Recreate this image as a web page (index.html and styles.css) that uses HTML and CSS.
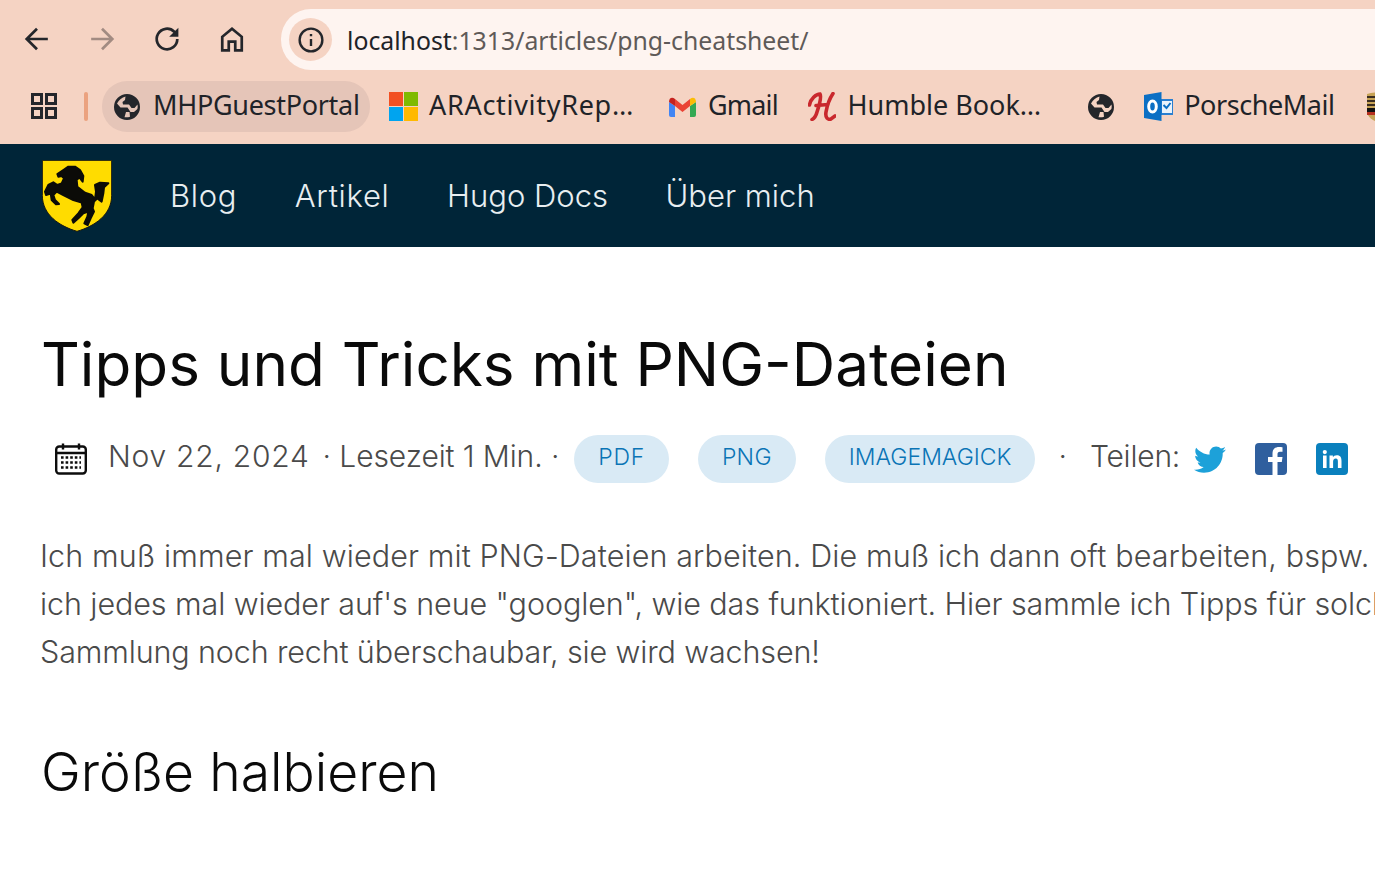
FILE: index.html
```html
<!DOCTYPE html>
<html lang="de">
<head>
<meta charset="utf-8">
<title>Tipps und Tricks mit PNG-Dateien</title>
<link rel="stylesheet" href="styles.css">
</head>
<body>
<header class="chrome">
  <div class="toolbar">
    <svg class="tool tool-back" viewBox="0 0 24 24"><path d="M22 12H2.500M12 2.500 2.500 12l9.500 9.500" /></svg>
    <svg class="tool tool-fwd" viewBox="0 0 24 24"><path d="M2 12h19.500M12 2.500l9.500 9.500-9.500 9.500" /></svg>
    <svg class="tool tool-reload" viewBox="0 0 24 24"><path d="M21.500 12a9.500 9.500 0 1 1-2.800-6.700L21 8" /><path class="solid" d="M22.500 1.500v8.500H14z" /></svg>
    <svg class="tool tool-home" viewBox="0 0 24 24"><path d="M3 22.500V10L12 2.500 21 10v12.500h-6v-8H9v8z" /></svg>
    <div class="omnibox">
      <span class="chip"><svg class="info" viewBox="0 0 24 24"><circle cx="12" cy="12" r="10.500" /><path d="M12 11v6.500M12 6.500v2" /></svg></span>
      <span class="url"><span class="host">localhost</span>:1313/articles/png-cheatsheet/</span>
    </div>
  </div>
  <div class="bookmarks">
    <svg class="apps" viewBox="0 0 26 26"><path d="M1.500 1.500h9v9h-9zM15.500 1.500h9v9h-9zM1.500 15.500h9v9h-9zM15.500 15.500h9v9h-9z" /></svg>
    <span class="sep"></span>
    <div class="bm bm-active">
      <svg class="ico" viewBox="0 0 26 26"><use href="#globe" /></svg>
      <span class="bm-label">MHPGuestPortal</span>
    </div>
    <div class="bm bm-ar">
      <svg class="ico ico-ms" viewBox="0 0 29 29"><rect width="14" height="14" fill="#f25022" /><rect x="15" width="14" height="14" fill="#7fba00" /><rect y="15" width="14" height="14" fill="#00a4ef" /><rect x="15" y="15" width="14" height="14" fill="#ffb900" /></svg>
      <span class="bm-label">ARActivityRep…</span>
    </div>
    <div class="bm bm-gmail">
      <svg class="ico ico-gmail" viewBox="0 0 27 20"><path d="M6 2l7.500 6L21 2v7l-7.500 6L6 9z" fill="#ea4335" /><path d="M0 5v13a2 2 0 0 0 2 2h4V9z" fill="#4285f4" /><path d="M27 5v13a2 2 0 0 1-2 2h-4V9z" fill="#34a853" /><path d="M0 5C0 1 3-.5 6 2v7z" fill="#c5221f" /><path d="M27 5c0-4-3-5.500-6-3v7z" fill="#fbbc04" /></svg>
      <span class="bm-label">Gmail</span>
    </div>
    <div class="bm bm-humble">
      <svg class="ico ico-humble" viewBox="0 0 28 29"><path d="M1.500 13C2.500 7 8 2 12 2c2 3-1 12-3 18-1 4-2 6-5 7.500M25 1.500C22 6 19 14 18 20c-1 6 2 8 5 7l4-3M8 13.500l12-1" /></svg>
      <span class="bm-label">Humble Book…</span>
    </div>
    <div class="bm bm-globe">
      <svg class="ico" viewBox="0 0 26 26"><use href="#globe" /></svg>
    </div>
    <div class="bm bm-outlook">
      <svg class="ico ico-outlook" viewBox="0 0 29 29"><rect x="16" y="7" width="13" height="16" fill="#2a7fd0" /><rect x="18" y="9" width="10" height="12" fill="#eaf3fb" /><path d="m19.500 13 3 3 4-5" class="tick" /><path d="M0 3 17.500 0v29L0 26z" fill="#0b6fc4" /><ellipse cx="8.500" cy="14.500" rx="3.800" ry="5.500" class="oh" /></svg>
      <span class="bm-label">PorscheMail</span>
    </div>
    <svg class="porsche" viewBox="0 0 20 30"><path d="M0 2C6 0 14 0 20 2v18c0 4-5 8-10 10C5 28 0 24 0 20z" fill="#c7a356" /><path d="M0 5h20M0 9h20M0 13h20" stroke="#3a2c20" stroke-width="2" /><rect y="16" width="20" height="4" fill="#111" /><rect y="20" width="20" height="3" fill="#b5301f" /></svg>
  </div>
</header>

<nav class="site-nav">
  <svg class="logo" viewBox="66 30 210 216">
    <path d="M67 31h208v105c0 58-50 92-104 108C117 228 67 194 67 136z" fill="#ffdc00" stroke="#1a1a10" stroke-width="3" />
    <path class="horse" d="M112 72 130 60 145 50h20l15 10 10 18-2 17-10-13-8 8 2 20 23 18 20 7 10 13 3-23-3-20 15-7 25 2-13 12-2 18-5 25-13-10-10 10-4 20 4 10-10 20-9 20-10-5 9-20 3-15-15 5-15 15-15 13-3-8 18-20 13-18-3-14-25-8-30-15-20-10-10 10 5 15 12 12-9 1-13-13-3-20-7 3-7 2-3-10 10-20 15-8 12 8 13-5 7-15-7-7-10 2z" />
  </svg>
  <a class="nav-link nav-wide">Blog</a>
  <a class="nav-link nav-wide">Artikel</a>
  <a class="nav-link">Hugo Docs</a>
  <a class="nav-link">Über mich</a>
</nav>

<main class="article">
  <h1>Tipps und Tricks mit PNG-Dateien</h1>
  <div class="meta">
    <svg class="cal" viewBox="0 0 32 32"><rect x="1.200" y="3.500" width="29.600" height="27" rx="3" class="cal-box" /><path d="M1 10h30M8 .5v6M24 .5v6" class="cal-box" /><path d="M6 14.500h20M6 19.500h20M6 24.500h20" class="cal-dots" /></svg>
    <span class="meta-text date">Nov 22, 2024</span>
    <span class="meta-text read">· Lesezeit 1 Min. ·</span>
    <a class="tag tag-pdf">PDF</a>
    <a class="tag tag-png">PNG</a>
    <a class="tag tag-im">IMAGEMAGICK</a>
    <span class="meta-text dot">·</span>
    <span class="meta-text share">Teilen:</span>
    <svg class="soc soc-tw" viewBox="0 0 32 26"><path d="M32 3.100c-1.200.5-2.400.9-3.800 1 1.400-.8 2.400-2.100 2.900-3.600-1.300.8-2.700 1.300-4.200 1.600C25.700.8 24 0 22.100 0c-3.600 0-6.600 2.900-6.600 6.600 0 .5.100 1 .2 1.500C10.200 7.800 5.400 5.200 2.200 1.200c-.6 1-.9 2.100-.9 3.300 0 2.300 1.200 4.300 2.900 5.500-1.100 0-2.100-.3-3-.8v.1c0 3.200 2.300 5.900 5.300 6.500-.6.100-1.100.2-1.700.2-.4 0-.8 0-1.200-.1.800 2.600 3.300 4.500 6.100 4.600-2.200 1.800-5.100 2.800-8.200 2.800-.5 0-1 0-1.600-.1 3 1.900 6.400 3 10.100 3 12.100 0 18.700-10 18.700-18.700v-.9c1.300-.9 2.400-2.100 3.300-3.500z" fill="#1da1d9" /></svg>
    <svg class="soc soc-fb" viewBox="0 0 32 32"><rect width="32" height="32" rx="4" fill="#2f5f9e" /><path d="M17.500 32V19h-4.500v-5h4.500v-3.500C17.500 6 20.200 4 24 4c1.500 0 2.800.1 3.500.2v4.500H25c-2 0-2.500 1-2.500 2.500V14h5l-.7 5h-4.300v13z" fill="#fff" /></svg>
    <svg class="soc soc-li" viewBox="0 0 32 32"><rect width="32" height="32" rx="4" fill="#0a80bd" /><path d="M7 12.500h3.600V25H7zM8.800 7a2.100 2.100 0 1 1 0 4.200 2.100 2.100 0 0 1 0-4.200zM13.500 12.500h3.400v1.700c.6-1.100 2-2 3.900-2 3.800 0 4.700 2.400 4.700 5.700V25h-3.600v-6.300c0-1.600-.2-3.100-2.100-3.100-2 0-2.700 1.400-2.700 3.100V25h-3.600z" fill="#fff" /></svg>
  </div>
  <p class="intro"><span class="line line-1">Ich muß immer mal wieder mit PNG-Dateien arbeiten. Die muß ich dann oft bearbeiten, bspw.</span><span class="line line-2">ich jedes mal wieder auf's neue "googlen", wie das funktioniert. Hier sammle ich Tipps für solch</span><span class="line line-3">Sammlung noch recht überschaubar, sie wird wachsen!</span></p>
  <h2>Größe halbieren</h2>
</main>

<svg class="defs" aria-hidden="true">
  <symbol id="globe" viewBox="0 0 26 26">
    <path fill="#24262b" fill-rule="evenodd" d="M13 0a13 13 0 1 1 0 26 13 13 0 0 1 0-26zM3 9.500C5 6 8 3.500 11.500 2.600L11 6 8.500 8 9 10.500h6L17.500 14h3l3-3.500c.3 1.500.3 3-.1 4.500L20 18h-3.500l-3-4.500h-7zM10.500 23.200 12 18h3.500l.5 4.800c-2 .6-3.500.7-5.500.4z" />
  </symbol>
</svg>
</body>
</html>
```

FILE: styles.css
```css
html, body {
  margin: 0;
  padding: 0;
  height: 880px;
  overflow: hidden;
  background: #fff;
}

.defs { display: none; }

.chrome {
  height: 144px;
  background: #f5d3c3;
  font-family: "Noto Sans", "Open Sans", sans-serif;
  color: #1f2328;
}

.toolbar {
  height: 78px;
  padding: 9px 0 0 24px;
  box-sizing: border-box;
  display: flex;
  align-items: flex-start;
}

.tool {
  width: 26px;
  height: 26px;
  margin-top: 17px;
  fill: none;
  stroke: #24262b;
  stroke-width: 2.500;
  flex: none;
}
.tool .solid { fill: #24262b; stroke: none; }
.tool-fwd { stroke: #a28b82; margin-left: 39px; }
.tool-reload { margin-left: 39px; }
.tool-home { margin-left: 39px; }

.omnibox {
  margin-left: 36px;
  flex: 1;
  height: 61px;
  background: #fef4f0;
  border-radius: 30px 0 0 30px;
  display: flex;
  align-items: center;
  padding-left: 8px;
}

.chip {
  width: 43px;
  height: 43px;
  border-radius: 50%;
  background: #f5d3c3;
  display: flex;
  align-items: center;
  justify-content: center;
}
.info {
  width: 26px;
  height: 26px;
  fill: none;
  stroke: #24262b;
  stroke-width: 2.200;
}

.url {
  margin-left: 15px;
  font-size: 24.800px;
  color: #5f5a58;
  white-space: nowrap;
}
.host { color: #1f2328; }

.bookmarks {
  height: 66px;
  display: flex;
  align-items: flex-start;
  padding-left: 31px;
  white-space: nowrap;
  overflow: hidden;
  font-size: 27px;
  letter-spacing: -0.300px;
}

.bm-label { margin-top: -5px; }

.apps {
  width: 26px;
  height: 26px;
  margin-top: 15px;
  fill: none;
  stroke: #24262b;
  stroke-width: 3;
  flex: none;
}

.sep {
  width: 4px;
  height: 29px;
  margin: 14px 0 0 27px;
  border-radius: 2px;
  background: #eba27f;
  flex: none;
}

.bm {
  display: flex;
  align-items: center;
  height: 51px;
  margin-top: 3px;
  flex: none;
}

.ico { width: 26px; height: 26px; flex: none; }

.bm-active {
  margin-left: 14px;
  padding: 0 11px 0 12px;
  width: 268px;
  box-sizing: border-box;
  gap: 13px;
  background: #e5c5b8;
  border-radius: 25px;
}

.bm-ar { margin-left: 19px; gap: 11px; letter-spacing: 0.700px; }
.ico-ms { width: 29px; height: 29px; }

.bm-gmail { margin-left: 35px; gap: 12px; letter-spacing: -0.800px; }
.ico-gmail { width: 27px; height: 20px; }

.bm-humble { margin-left: 30.500px; gap: 11px; letter-spacing: 0; }
.ico-humble {
  width: 28px;
  height: 29px;
  fill: none;
  stroke: #c9282d;
  stroke-width: 3.600;
  stroke-linecap: round;
}

.bm-globe { margin-left: 47px; }

.bm-outlook { margin-left: 30px; gap: 11px; letter-spacing: -0.450px; }
.ico-outlook { width: 29px; height: 29px; }
.tick { fill: none; stroke: #0b6fc4; stroke-width: 2; }
.oh { fill: none; stroke: #fff; stroke-width: 3; }

.porsche {
  width: 20px;
  height: 30px;
  margin: 14px 0 0 33px;
  flex: none;
}

.site-nav {
  height: 103px;
  background: #002538;
  display: flex;
  align-items: center;
  padding-left: 42px;
  font-family: "Inter", "Lato", sans-serif;
  font-weight: 300;
  font-size: 31px;
  color: #e8eef1;
}

.logo {
  width: 70px;
  height: 72px;
  margin-right: 58px;
  flex: none;
}
.horse {
  fill: #0b0b08;
  stroke: #0b0b08;
  stroke-width: 6;
  stroke-linejoin: round;
}

.nav-link { margin-right: 57.500px; white-space: nowrap; }
.nav-wide { letter-spacing: 0.700px; }

.article {
  padding: 0 0 0 40px;
  font-family: "Inter", "Lato", sans-serif;
  font-weight: 300;
  color: #4a4a4a;
  white-space: nowrap;
}

h1 {
  margin: 76px 0 0 1px;
  font-size: 60.200px;
  line-height: 84px;
  font-weight: 400;
  color: #0a0a0a;
}

h2 {
  margin: 61px 0 0 1px;
  font-size: 53.500px;
  line-height: 70px;
  font-weight: 300;
  color: #0a0a0a;
}

.meta {
  margin-top: 28px;
  display: flex;
  align-items: center;
  height: 48px;
  font-size: 30px;
}

.meta-text { padding-bottom: 6px; }

.cal {
  width: 32px;
  height: 32px;
  margin: 0 0 0 15px;
  flex: none;
}
.cal-box { fill: none; stroke: #0d0d0d; stroke-width: 2.400; }
.cal-dots { fill: none; stroke: #0d0d0d; stroke-width: 2.600; stroke-dasharray: 2.600 2; }

.date { margin-left: 21px; letter-spacing: 0.750px; }
.read { margin-left: 13px; letter-spacing: -0.100px; }

.tag {
  height: 48px;
  box-sizing: border-box;
  padding: 0 24px 5px;
  border-radius: 24px;
  background: #d9eaf5;
  color: #0a74b5;
  font-size: 23px;
  font-weight: 300;
  display: flex;
  align-items: center;
  flex: none;
}
.tag-pdf { margin-left: 15px; letter-spacing: 0.700px; }
.tag-png { margin-left: 29px; letter-spacing: 0.300px; }
.tag-im { margin-left: 29px; }

.dot { margin-left: 23px; }
.share { margin-left: 23px; letter-spacing: -0.200px; }

.soc { flex: none; width: 32px; height: 32px; }
.soc-tw { margin-left: 14px; height: 27px; }
.soc-fb { margin-left: 29px; }
.soc-li { margin-left: 29px; }

.intro {
  margin: 49px 0 0;
  font-size: 30.500px;
  line-height: 48px;
}

.line { display: block; }
.line-1 { letter-spacing: 0.110px; }
.line-2 { letter-spacing: -0.090px; }
.line-3 { letter-spacing: -0.140px; }
```
